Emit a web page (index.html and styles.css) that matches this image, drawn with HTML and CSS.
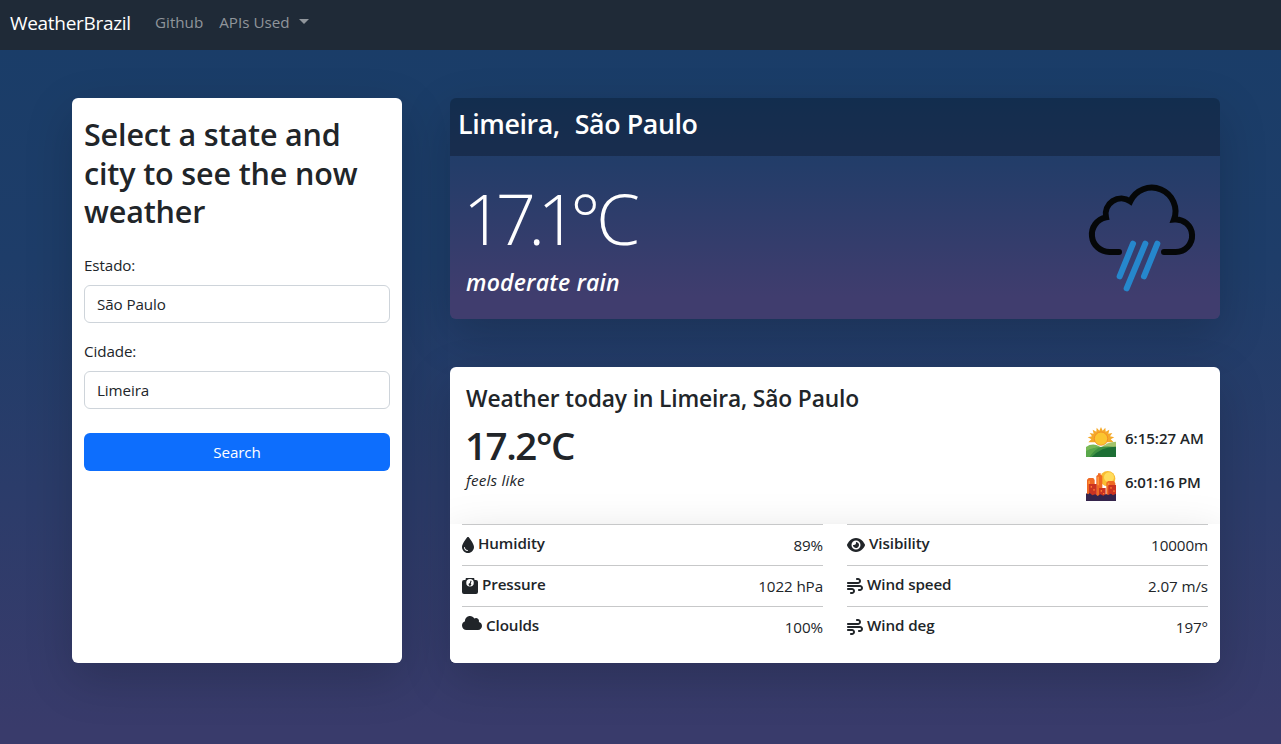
FILE: index.html
```html
<!DOCTYPE html>
<html lang="en">
<head>
<meta charset="utf-8">
<title>WeatherBrazil</title>
<link rel="stylesheet" href="styles.css">
</head>
<body>
<svg class="defs" width="0" height="0" aria-hidden="true">
  <symbol id="wind" viewBox="0 0 512 512"><path d="M288 32c0 17.700 14.300 32 32 32h32c17.700 0 32 14.300 32 32s-14.300 32-32 32H32c-17.700 0-32 14.300-32 32s14.300 32 32 32H352c53 0 96-43 96-96s-43-96-96-96H320c-17.700 0-32 14.300-32 32zm64 352c0 17.700 14.300 32 32 32h32c53 0 96-43 96-96s-43-96-96-96H32c-17.700 0-32 14.300-32 32s14.300 32 32 32H416c17.700 0 32 14.300 32 32s-14.300 32-32 32H384c-17.700 0-32 14.300-32 32zM128 512h32c53 0 96-43 96-96s-43-96-96-96H32c-17.700 0-32 14.300-32 32s14.300 32 32 32H160c17.700 0 32 14.300 32 32s-14.300 32-32 32H128c-17.700 0-32 14.300-32 32s14.300 32 32 32z"/></symbol>
</svg>
<nav class="navbar">
  <a class="brand">WeatherBrazil</a>
  <a class="nav-link">Github</a>
  <a class="nav-link apis">APIs Used<span class="caret"></span></a>
</nav>
<main class="layout">
  <section class="search-card">
    <h2 class="search-title">Select a state and<br>city to see the now<br>weather</h2>
    <div class="label">Estado:</div>
    <div class="field">São Paulo</div>
    <div class="label">Cidade:</div>
    <div class="field">Limeira</div>
    <button class="search-btn">Search</button>
  </section>
  <div class="column">
    <section class="now-card">
      <h3 class="place"><span>Limeira,</span><span>São Paulo</span></h3>
      <div class="now-body">
        <div>
          <div class="temp">17.1<span class="degree">°</span>C</div>
          <div class="condition">moderate rain</div>
        </div>
        <svg class="rain" viewBox="48 30 330 345" fill="none" stroke-width="18" stroke-linecap="round">
          <path stroke="#050708" d="M147 246H119A52.500 52.500 0 0 1 108 142A47 47 0 0 1 181 94A71 71 0 0 1 312 148.500A48.900 48.900 0 1 1 317 246H282"/>
          <path stroke="#2687cc" d="M189 221L149 319M226 221L170 355M262 221L222 319"/>
        </svg>
      </div>
    </section>
    <section class="today-card">
      <div class="today-top">
        <h4 class="today-title">Weather today in Limeira, São Paulo</h4>
        <div class="today-row">
          <div>
            <div class="feels-temp">17.2°C</div>
            <div class="feels">feels like</div>
          </div>
          <div class="sun-times">
            <div class="sun-time">
              <svg width="30" height="30" viewBox="0 0 90 90">
                <path fill="#f5a928" d="M45 0l5 11 8-9 1 12 11-6-3 12 12-2-7 10 13 3-11 6 9 9H7l9-9-11-6 13-3-7-10 12 2-3-12 11 6 1-12 8 9z"/>
                <circle cx="45" cy="35" r="20" fill="#fbc530" stroke="#f07b22" stroke-width="2"/>
                <path fill="#79b957" d="M0 60Q14 50 31 54L62 68V90H0z"/>
                <path fill="#a4c46b" d="M44 62Q65 44 90 44V90H35z"/>
                <path fill="#3f9142" d="M0 74Q40 53 90 60V90H0z"/>
                <path fill="#1d6f35" d="M17 90Q48 58 90 59V90z"/>
                <path fill="#59a74b" d="M0 72Q25 60 43 61Q27 67 10 90H0z"/>
              </svg>
              <span>6:15:27 AM</span>
            </div>
            <div class="sun-time pm">
              <svg width="30" height="30" viewBox="0 0 90 90">
                <circle cx="65" cy="23" r="23" fill="#f9bc32"/><circle cx="69" cy="19" r="15" fill="#ffdc5c"/>
                <path fill="#ef6924" d="M3 75V26l5-5h14l4 6v48zM31 75V15l5-4V7h8v4l5 4v60zM61 75V35l5-5h17l5 6v39z"/>
                <path fill="#ff9439" d="M7 29h5v10H7zM34 17h5v26h-5zM65 35h5v11h-5z"/>
                <path fill="#ca3321" d="M9 75V39h23v36zM39 75V51h20v24zM67 75V42h23v33z"/>
                <path fill="#ff7a2d" d="M14 45h4v5h-4zM22 54h4v5h-4zM44 57h4v5h-4zM51 66h4v4h-4zM73 48h4v5h-4zM82 58h4v5h-4z"/>
                <path fill="#35254c" d="M0 67l7 3 4-4 8 7 9-3 7 5 8-5 9 4 8-5 7 3 8-4 6 5 9-5V90H0z"/>
              </svg>
              <span>6:01:16 PM</span>
            </div>
          </div>
        </div>
      </div>
      <div class="details">
        <div class="detail"><svg class="icon w12" viewBox="0 0 384 512"><path d="M192 512C86 512 0 426 0 320C0 228.800 130.200 57.700 166.600 11.700C172.600 4.200 181.500 0 191.100 0h1.800c9.600 0 18.500 4.200 24.500 11.700C253.800 57.700 384 228.800 384 320c0 106-86 192-192 192zM96 336c0-8.800-7.200-16-16-16s-16 7.200-16 16c0 61.900 50.100 112 112 112c8.800 0 16-7.200 16-16s-7.200-16-16-16c-44.200 0-80-35.800-80-80z"/></svg><span class="name">Humidity</span><span class="value">89%</span></div>
        <div class="detail"><svg class="icon w18" viewBox="0 0 576 512"><path d="M288 32c-80.800 0-145.500 36.800-192.600 80.600C48.600 156 17.300 208 2.500 243.700c-3.300 7.900-3.300 16.700 0 24.600C17.300 304 48.600 356 95.400 399.400C142.500 443.200 207.200 480 288 480s145.500-36.800 192.600-80.600c46.800-43.500 78.100-95.400 93-131.100c3.300-7.900 3.300-16.700 0-24.600c-14.900-35.700-46.200-87.700-93-131.100C433.500 68.800 368.800 32 288 32zM144 256a144 144 0 1 1 288 0 144 144 0 1 1 -288 0zm144-64c0 35.300-28.700 64-64 64c-7.100 0-13.900-1.200-20.300-3.300c-5.500-1.800-11.900 1.600-11.700 7.400c.3 6.900 1.300 13.800 3.200 20.700c13.700 51.200 66.400 81.600 117.600 67.900s81.600-66.400 67.900-117.600c-11.100-41.500-47.800-69.400-88.600-71.100c-5.800-.2-9.200 6.100-7.400 11.700c2.100 6.400 3.300 13.200 3.300 20.300z"/></svg><span class="name">Visibility</span><span class="value">10000m</span></div>
        <div class="detail"><svg class="icon w16" viewBox="0 0 512 512"><path fill-rule="evenodd" d="M64 64h48a144 144 0 0 1 288 0h48a64 64 0 0 1 64 64v320a64 64 0 0 1-64 64H64a64 64 0 0 1-64-64V128a64 64 0 0 1 64-64zM256 32a120 120 0 1 0 0 240 120 120 0 1 0 0-240zM276 82l32 12-28 84a40 40 0 1 1-32-10z"/></svg><span class="name">Pressure</span><span class="value">1022 hPa</span></div>
        <div class="detail"><svg class="icon w16"><use href="#wind"/></svg><span class="name">Wind speed</span><span class="value">2.07 m/s</span></div>
        <div class="detail"><svg class="icon w20" viewBox="0 0 640 512"><path d="M0 336c0 79.500 64.500 144 144 144H512c70.700 0 128-57.300 128-128c0-61.900-44-113.600-102.400-125.400c4.100-10.700 6.400-22.400 6.400-34.600c0-53-43-96-96-96c-19.700 0-38.100 6-53.300 16.200C367 64.200 315.300 32 256 32C167.600 32 96 103.600 96 192c0 2.700 .1 5.400 .2 8.100C40.200 219.800 0 273.200 0 336z"/></svg><span class="name">Cloulds</span><span class="value">100%</span></div>
        <div class="detail"><svg class="icon w16"><use href="#wind"/></svg><span class="name">Wind deg</span><span class="value">197°</span></div>
      </div>
    </section>
  </div>
</main>
</body>
</html>
```
FILE: styles.css
```css
* { box-sizing: border-box; }
html { height: 100%; }
body {
  margin: 0;
  height: 744px;
  overflow: hidden;
  color: #212529;
  font: 400 15.2px/24px "Open Sans", "Noto Sans", sans-serif;
  letter-spacing: -0.1px;
  background: linear-gradient(#193d68, #1e3d69 35%, #393b6b 98%);
}
h2, h3, h4 { margin: 0; font-weight: 600; }
.defs { display: none; }

.navbar {
  display: flex;
  height: 50px;
  padding: 0 10px;
  background: #1f2a37;
  color: #90959b;
}
.brand { color: #fff; font-size: 19px; line-height: 46px; width: 145px; letter-spacing: -0.3px; }
.nav-link { line-height: 44px; margin-right: 16px; letter-spacing: 0; }
.caret {
  display: inline-block;
  margin-left: 9px;
  vertical-align: 4px;
  border: 5px solid transparent;
  border-top-color: currentColor;
  border-bottom: 0;
}

.layout { display: flex; gap: 48px; padding: 48px 61px 0 72px; }
.search-card, .now-card, .today-card {
  border-radius: 6px;
  box-shadow: 0 16px 48px rgba(0, 0, 0, .175);
}
.search-card { width: 330px; height: 565px; padding: 17px 12px; background: #fff; }
.search-title { font-size: 30.5px; line-height: 38.5px; margin-bottom: 22px; letter-spacing: -0.15px; white-space: nowrap; }
.label { line-height: 24px; margin-bottom: 8px; }
.field {
  height: 38px;
  padding: 0 12px;
  line-height: 37px;
  margin-bottom: 16px;
  border: 1px solid #ced4da;
  border-radius: 6px;
}
.search-btn {
  display: block;
  width: 100%;
  height: 38px;
  margin-top: 24px;
  border: 0;
  border-radius: 6px;
  background: #0d6efd;
  color: #fff;
  font: inherit;
  letter-spacing: inherit;
}

.column { width: 770px; display: flex; flex-direction: column; gap: 48px; }
.now-card {
  height: 221px;
  overflow: hidden;
  color: #fff;
  background: linear-gradient(#193d68, #233d69 30%, #403d6e 90%);
}
.place {
  display: flex;
  gap: 15px;
  height: 58px;
  padding-left: 8px;
  font-size: 26.8px;
  line-height: 52px;
  letter-spacing: -0.4px;
  background: rgba(0, 0, 0, .25);
}
.now-body { display: flex; justify-content: space-between; padding: 24px 24px 0 16px; }
.temp { font-size: 70.5px; font-weight: 300; line-height: 76px; margin-left: -3px; letter-spacing: -7.6px; }
.degree { letter-spacing: -4px; }
.condition { font-size: 23px; font-weight: 600; font-style: italic; line-height: 36px; margin-top: 8px; letter-spacing: 0.2px; }
.rain { width: 110px; height: 115px; }

.today-card { height: 296px; background: #fff; }
.today-top { height: 157px; padding: 16px 16px 0; }
.today-title { font-size: 22.8px; line-height: 32px; letter-spacing: -0.15px; }
.today-row { display: flex; justify-content: space-between; }
.feels-temp { font-size: 38.5px; font-weight: 600; line-height: 48px; margin: 6px 0 1px -1px; letter-spacing: -1.4px; }
.feels { font-style: italic; line-height: 20px; letter-spacing: 0.2px; }
.sun-times { width: 118px; padding-top: 12px; display: flex; flex-direction: column; gap: 14px; }
.sun-time { display: flex; gap: 9px; height: 30px; line-height: 22px; font-size: 15px; font-weight: 600; letter-spacing: 0; white-space: nowrap; }
.sun-time.pm { letter-spacing: -0.25px; }
.details {
  display: grid;
  grid-template-columns: 1fr 1fr;
  grid-auto-rows: 41px;
  column-gap: 24px;
  height: 139px;
  padding: 0 12px;
  background: #fff;
  border-radius: 0 0 6px 6px;
  box-shadow: 0 16px 48px rgba(0, 0, 0, .175);
  clip-path: inset(-60px 0 0 0);
}
.detail { display: flex; border-top: 1px solid #c7c8c9; }
.icon { height: 16px; margin: 12px 4px 0 0; fill: #212529; }
.w12 { width: 12px; }
.w16 { width: 16px; }
.w18 { width: 18px; }
.w20 { width: 20px; margin-top: 8px; }
.name { font-weight: 600; line-height: 36px; letter-spacing: -0.1px; }
.value { margin-left: auto; line-height: 40px; letter-spacing: -0.1px; }
```
